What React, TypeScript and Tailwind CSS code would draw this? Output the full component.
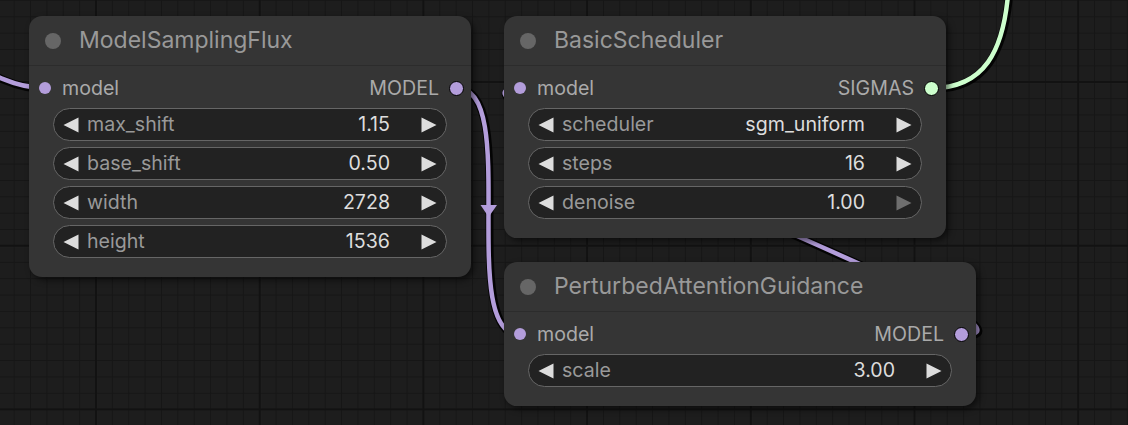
import React from 'react';

type Widget = { label: string; value: string; dimRight?: boolean };

type NodeDef = {
  id: string;
  title: string;
  pos: string;
  output: string;
  outColor: string;
  widgets: Widget[];
};

const nodes: NodeDef[] = [
  {
    id: 'msf',
    title: 'ModelSamplingFlux',
    pos: 'left-[29px] top-[16px] w-[442px]',
    output: 'MODEL',
    outColor: 'bg-[#b39ddb]',
    widgets: [
      { label: 'max_shift', value: '1.15' },
      { label: 'base_shift', value: '0.50' },
      { label: 'width', value: '2728' },
      { label: 'height', value: '1536' },
    ],
  },
  {
    id: 'sched',
    title: 'BasicScheduler',
    pos: 'left-[504px] top-[16px] w-[442px]',
    output: 'SIGMAS',
    outColor: 'bg-[#cdffcd]',
    widgets: [
      { label: 'scheduler', value: 'sgm_uniform' },
      { label: 'steps', value: '16' },
      { label: 'denoise', value: '1.00', dimRight: true },
    ],
  },
  {
    id: 'pag',
    title: 'PerturbedAttentionGuidance',
    pos: 'left-[504px] top-[262px] w-[472px]',
    output: 'MODEL',
    outColor: 'bg-[#b39ddb]',
    widgets: [{ label: 'scale', value: '3.00' }],
  },
];

function Arrow({ dir, dim }: { dir: 'left' | 'right'; dim?: boolean }) {
  const pts = dir === 'left' ? '0.5,8 15.5,0.5 15.5,15.5' : '0.5,0.5 15.5,8 0.5,15.5';
  return (
    <svg width="16" height="16" viewBox="0 0 16 16" className="shrink-0">
      <polygon points={pts} fill={dim ? '#6e6e6e' : '#dddddd'} />
    </svg>
  );
}

function NumberWidget({ w }: { w: Widget }) {
  return (
    <div className="flex h-[33px] items-center rounded-full border border-[#666] bg-[#222] pl-[9px] pr-[9px]">
      <Arrow dir="left" />
      <span className="ml-[8px] text-[#999]">{w.label}</span>
      <span className="ml-auto mr-[31px] text-[#ddd]">{w.value}</span>
      <Arrow dir="right" dim={w.dimRight} />
    </div>
  );
}

function GraphNode({ node }: { node: NodeDef }) {
  return (
    <div
      className={`absolute ${node.pos} rounded-[13px] bg-[#353535] shadow-[3px_3px_6px_rgba(0,0,0,0.55)]`}
    >
      <div className="flex h-[50px] items-center border-b border-[#2c2c2c] pl-4">
        <span className="h-4 w-4 rounded-full bg-[#666]" />
        <span className="ml-[18px] text-[23px] text-[#999]">{node.title}</span>
      </div>
      <div className="flex flex-col pb-[19px] pt-[6px] text-[19.6px]">
        <div className="flex h-[33px] items-center justify-between pl-[10px] pr-[7px]">
          <div className="flex items-center gap-[11px]">
            <span className="h-3 w-3 rounded-full bg-[#b39ddb]" />
            <span className="text-[#aaa]">model</span>
          </div>
          <div className="flex items-center gap-[10px]">
            <span className="text-[#aaa]">{node.output}</span>
            <span className={`h-[15px] w-[15px] rounded-full border-[1.5px] border-black ${node.outColor}`} />
          </div>
        </div>
        <div className="mt-[3px] flex flex-col gap-[6px] px-6">
          {node.widgets.map((w) => (
            <NumberWidget key={w.label} w={w} />
          ))}
        </div>
      </div>
    </div>
  );
}

function Wire({ d, color }: { d: string; color: string }) {
  return (
    <g fill="none" strokeLinecap="round">
      <path d={d} stroke="#000" strokeOpacity="0.85" strokeWidth="8" transform="translate(1 1)" />
      <path d={d} stroke={color} strokeWidth="4.5" />
    </g>
  );
}

function Canvas() {
  return (
    <svg className="absolute inset-0" width="1128" height="425" viewBox="0 0 1128 425">
      <defs>
        <pattern id="minor" width="16.37" height="16.37" x="13.65" y="-0.1" patternUnits="userSpaceOnUse">
          <rect x="0" y="0" width="1" height="16.37" fill="#161616" />
          <rect x="0" y="0" width="16.37" height="1" fill="#161616" />
        </pattern>
        <pattern id="major" width="163.7" height="163.7" x="95" y="81" patternUnits="userSpaceOnUse">
          <rect x="0" y="0" width="2" height="163.7" fill="#121212" />
          <rect x="0" y="0" width="163.7" height="2" fill="#121212" />
        </pattern>
      </defs>
      <rect width="1128" height="425" fill="#1d1d1d" />
      <rect width="1128" height="425" fill="url(#minor)" />
      <rect width="1128" height="425" fill="url(#major)" />

      <Wire d="M -40 55 C -15 70, 10 88, 45 88" color="#b39ddb" />
      <Wire d="M 457 88 C 521 88, 456 335, 520 335" color="#b39ddb" />
      <Wire d="M 962 335 C 1088 335, 394 88, 520 88" color="#b39ddb" />
      <Wire d="M 932 88 C 985 88, 1003 50, 1008 -5" color="#cdffcd" />
      <polygon points="480.5,205 497,205 488.7,217" fill="#b39ddb" />
    </svg>
  );
}

export default function App() {
  return (
    <div className="relative h-[425px] w-[1128px] overflow-hidden bg-[#1d1d1d] font-['Inter',sans-serif]">
      <Canvas />
      {nodes.map((n) => (
        <GraphNode key={n.id} node={n} />
      ))}
    </div>
  );
}
